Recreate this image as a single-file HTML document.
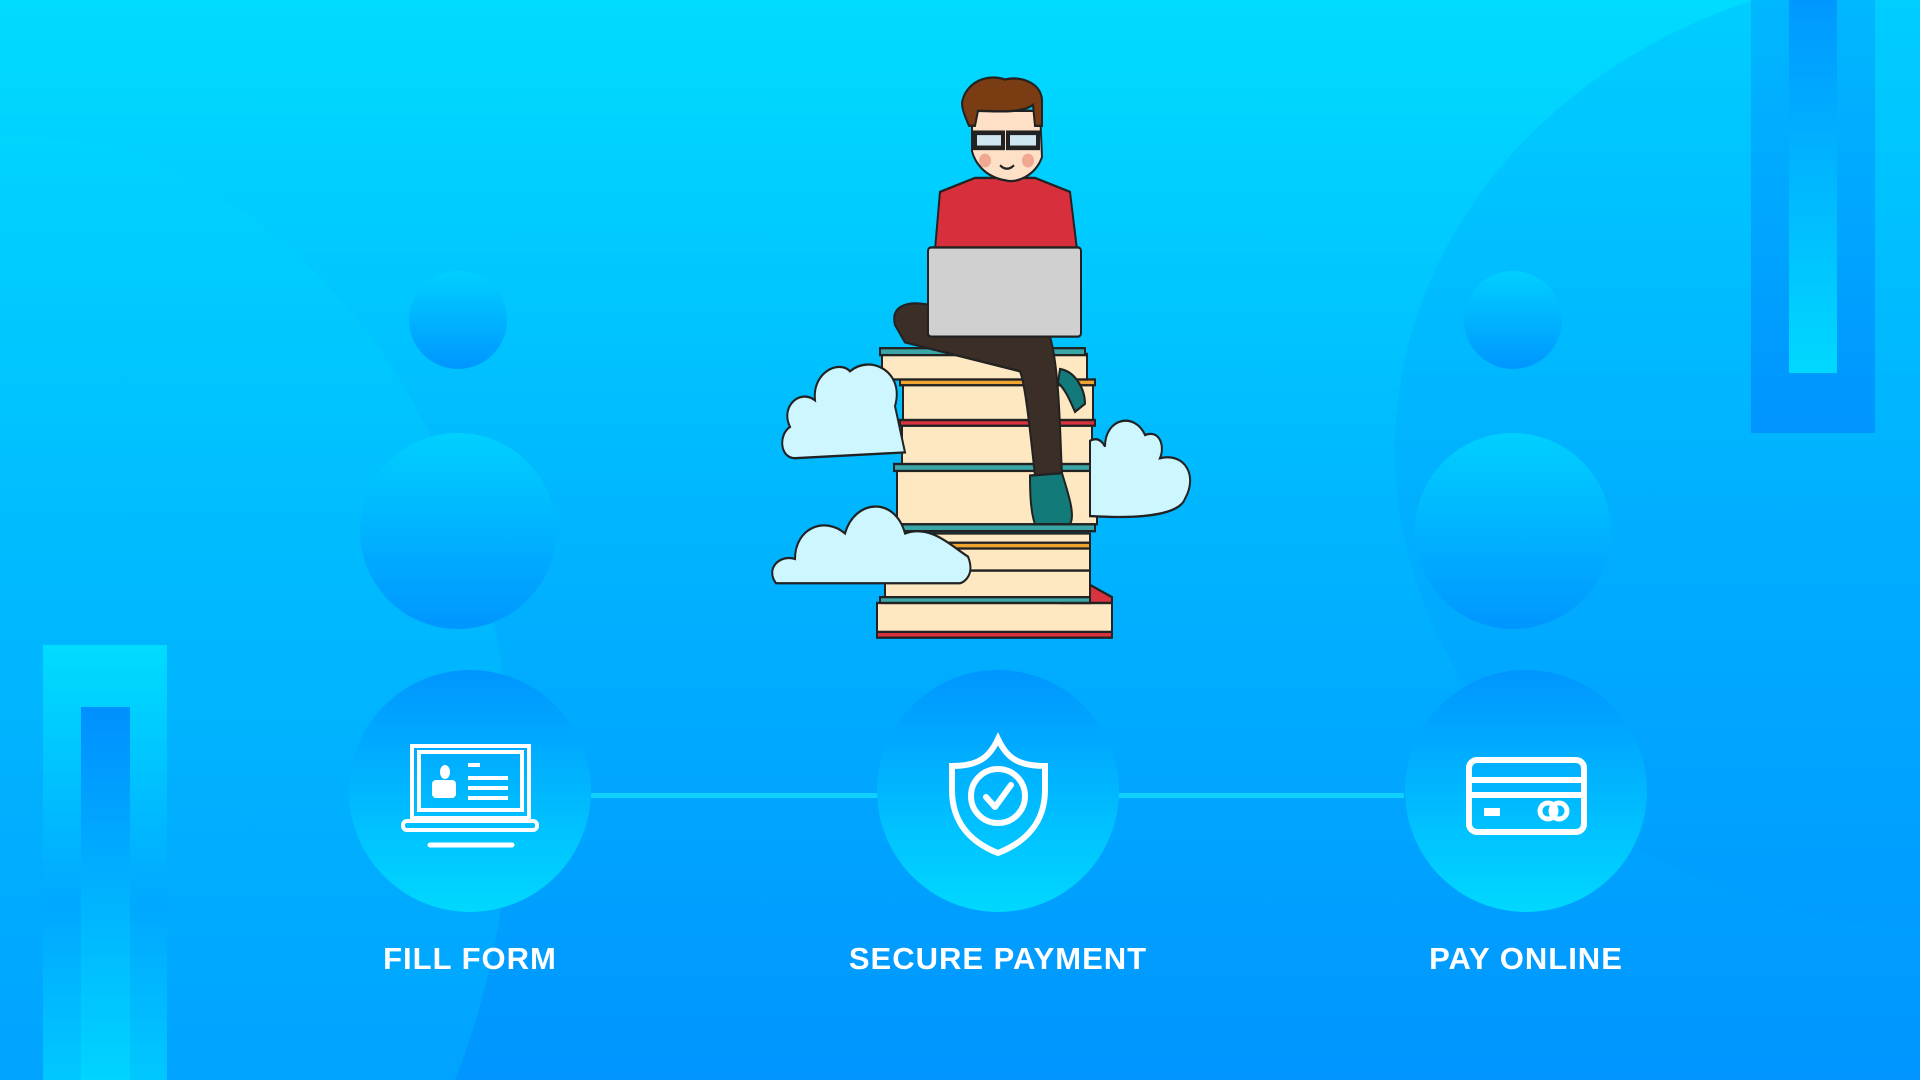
<!DOCTYPE html>
<html><head><meta charset="utf-8"><style>
html,body{margin:0;padding:0;width:1920px;height:1080px;overflow:hidden;background:#0095ff;}
#w{position:relative;width:1920px;height:1080px;overflow:hidden;background:linear-gradient(180deg,#00dcff 0%,#00b4ff 50%,#0095ff 100%);font-family:"Liberation Sans",sans-serif;}
.a{position:absolute;}
.sc{border-radius:50%;background:linear-gradient(180deg,#00d0ff,#0096ff);}
.ic{border-radius:50%;background:linear-gradient(180deg,#0096ff,#00d8ff);width:242px;height:242px;top:670px;}
.lbl{position:absolute;top:941px;color:#fff;font-weight:bold;font-size:31px;letter-spacing:1px;text-align:center;width:500px;}
</style></head><body><div id="w">
<div class="a" style="left:-500px;top:135px;width:1010px;height:1300px;border-radius:50%;background:rgba(0,220,255,0.2);"></div>
<div class="a" style="left:1395px;top:-30px;width:1100px;height:960px;border-radius:50%;background:rgba(0,150,255,0.2);"></div>

<div class="a sc" style="left:409px;top:271px;width:98px;height:98px;"></div>
<div class="a sc" style="left:360px;top:433px;width:196px;height:196px;"></div>
<div class="a sc" style="left:1464px;top:271px;width:98px;height:98px;"></div>
<div class="a sc" style="left:1415px;top:433px;width:196px;height:196px;"></div>

<div class="a" style="left:43px;top:645px;width:124px;height:435px;background:linear-gradient(180deg,#00dcff,#00a8ff 60%,#00c8ff);"></div>
<div class="a" style="left:81px;top:707px;width:49px;height:373px;background:linear-gradient(180deg,#0090ff,#00d4ff);"></div>
<div class="a" style="left:1751px;top:0;width:124px;height:433px;background:linear-gradient(180deg,#00b8ff,#0094ff);"></div>
<div class="a" style="left:1789px;top:0;width:48px;height:373px;background:linear-gradient(180deg,#0098ff,#00d8ff);"></div>

<div class="a" style="left:591px;top:793px;width:813px;height:5px;background:#10d0ff;"></div>
<div class="a ic" style="left:349px;"></div>
<div class="a ic" style="left:877px;"></div>
<div class="a ic" style="left:1405px;"></div>

<svg class="a" style="left:0;top:0" width="1920" height="1080" viewBox="0 0 1920 1080">
<g fill="none" stroke="#fff" stroke-width="4">
 <rect x="412" y="746" width="117" height="72"/>
 <rect x="419" y="752" width="103" height="58"/>
 <rect x="403" y="821" width="134" height="9" rx="4"/>
 <line x1="430" y1="845" x2="512" y2="845" stroke-width="5" stroke-linecap="round"/>
 <line x1="468" y1="765" x2="480" y2="765"/>
 <line x1="468" y1="778" x2="508" y2="778"/>
 <line x1="468" y1="788" x2="508" y2="788"/>
 <line x1="468" y1="798" x2="508" y2="798"/>
 <path d="M998 739 C990 756 980 766 952 766 L952 790 C952 822 970 842 998 853 C1026 842 1045 822 1045 790 L1045 766 C1016 766 1006 756 998 739 Z" stroke-width="6"/>
 <circle cx="998" cy="796" r="27" stroke-width="6"/>
 <path d="M986 797 L995 807 L1011 785" stroke-width="6" stroke-linecap="round" stroke-linejoin="round"/>
 <rect x="1469" y="760" width="115" height="72" rx="8" stroke-width="6"/>
 <line x1="1469" y1="780" x2="1584" y2="780" stroke-width="6"/>
 <line x1="1469" y1="795" x2="1584" y2="795" stroke-width="6"/>
 <line x1="1484" y1="812" x2="1500" y2="812" stroke-width="8"/>
 <circle cx="1548" cy="811" r="8" stroke-width="5"/>
 <circle cx="1559" cy="811" r="8" stroke-width="5"/>
</g>
<g fill="#fff">
 <ellipse cx="445" cy="772" rx="5" ry="7"/>
 <rect x="432" y="780" width="24" height="18" rx="4"/>
</g>
<g transform="translate(0,-10.8) scale(1,1.158)">
<g stroke="#222" stroke-width="2">
 <rect x="877" y="530" width="235" height="28" fill="#fde8c2"/>
 <rect x="877" y="555" width="235" height="5" fill="#d8333f"/>
 <polygon points="1060,500 1112,525 1112,530 1060,530" fill="#d8333f"/>
 <rect x="885" y="502" width="205" height="28" fill="#fde8c2"/>
 <rect x="880" y="525" width="210" height="5" fill="#3aa6a6"/>
 <rect x="895" y="470" width="195" height="32" fill="#fde8c2"/>
 <rect x="895" y="478" width="195" height="5" fill="#f0a530"/>
 <rect x="895" y="462" width="200" height="6" fill="#3aa6a6"/>
 <rect x="897" y="412" width="200" height="50" fill="#fde8c2"/>
 <rect x="894" y="410" width="203" height="6" fill="#3aa6a6"/>
 <rect x="902" y="375" width="190" height="35" fill="#fde8c2"/>
 <rect x="900" y="372" width="195" height="5" fill="#d8333f"/>
 <rect x="903" y="340" width="190" height="32" fill="#fde8c2"/>
 <rect x="900" y="337" width="195" height="5" fill="#f0a530"/>
 <rect x="882" y="315" width="205" height="22" fill="#fde8c2"/>
 <rect x="880" y="310" width="205" height="6" fill="#3aa6a6"/>
 <path d="M790 378 C780 360 800 345 815 355 C812 330 840 320 850 330 C870 315 905 330 895 360 L905 400 L795 405 C780 405 778 385 790 378 Z" fill="#cdf6ff"/>
 <path d="M1090 390 C1100 385 1105 395 1105 395 C1105 370 1135 365 1145 385 C1160 380 1165 395 1160 405 C1185 400 1198 420 1185 440 C1180 452 1150 458 1090 455 Z" fill="#cdf6ff"/>
 <path d="M776 513 C765 500 780 488 795 492 C795 465 825 455 845 470 C855 440 895 438 905 470 C930 462 950 480 968 490 C975 505 965 512 960 513 Z" fill="#cdf6ff"/>
 <path d="M940 175 L975 163 L1035 163 L1070 175 L1077 225 L935 225 Z" fill="#d82f3d"/>
 <path d="M895 290 C890 272 910 270 925 272 L1050 300 C1060 330 1060 390 1062 418 L1035 420 C1030 380 1025 340 1020 330 L905 305 Z" fill="#3a2e26"/>
 <path d="M1030 420 L1062 418 C1070 440 1075 455 1070 462 L1035 462 C1030 450 1030 430 1030 420 Z" fill="#127a78"/>
 <path d="M1060 328 C1075 330 1085 345 1085 358 L1075 365 C1070 355 1065 345 1058 340 Z" fill="#127a78"/>
 <rect x="928" y="223" width="153" height="77" rx="3" fill="#d0d0d0"/>
 <path d="M972 105 L1040 105 L1042 145 C1035 162 1015 168 1005 165 C985 162 975 150 972 140 Z" fill="#fde0c6"/>
 <path d="M962 98 C965 82 985 72 1005 78 C1020 75 1040 80 1042 95 L1042 118 L1035 118 L1033 100 C1020 108 990 105 978 105 L975 118 L969 118 C965 110 962 104 962 98 Z" fill="#7a3c12"/>
 <rect x="975" y="124" width="28" height="13" fill="#cfe6f0" stroke-width="4"/>
 <rect x="1008" y="124" width="30" height="13" fill="#cfe6f0" stroke-width="4"/>
</g>
<circle cx="985" cy="148" r="6" fill="#f0a890"/>
<circle cx="1028" cy="148" r="6" fill="#f0a890"/>
<path d="M1000 152 Q1007 158 1014 152" fill="none" stroke="#222" stroke-width="2"/>
</g>
</svg>

<div class="lbl" style="left:220px;">FILL FORM</div>
<div class="lbl" style="left:748px;">SECURE PAYMENT</div>
<div class="lbl" style="left:1276px;">PAY ONLINE</div>
</div></body></html>
